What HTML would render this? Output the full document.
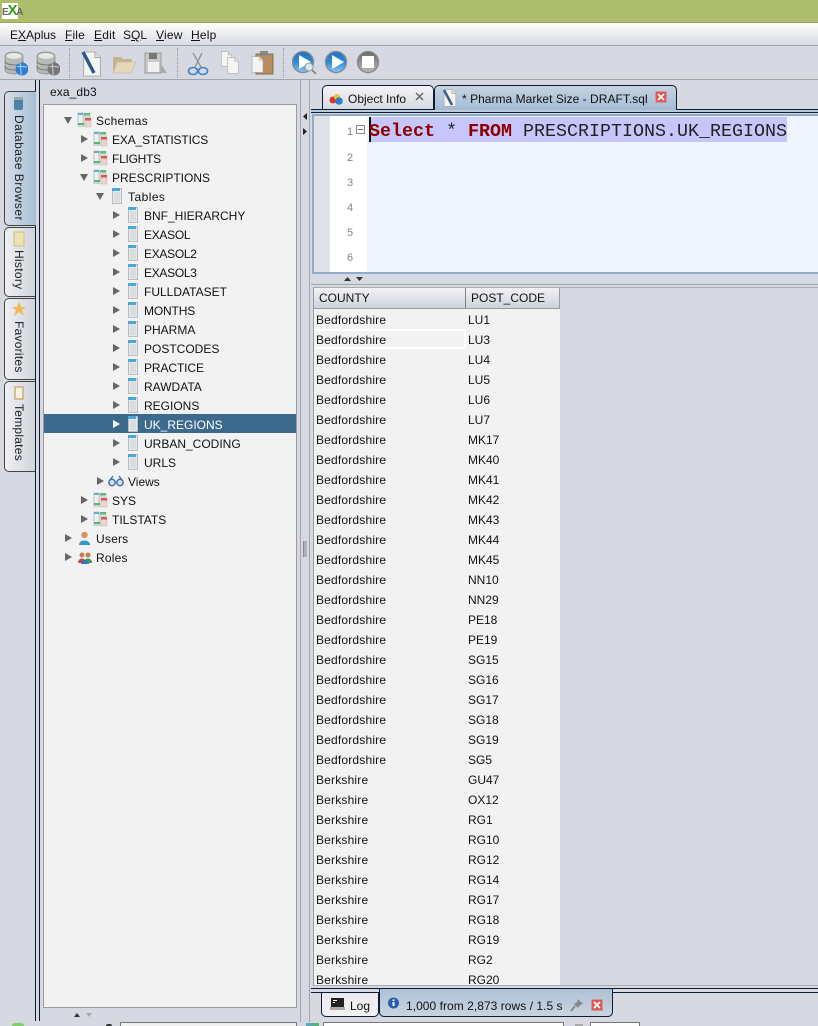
<!DOCTYPE html>
<html><head><meta charset="utf-8"><style>
html,body{margin:0;padding:0;background:#d6d9e1}
#p{position:relative;width:818px;height:1026px;overflow:hidden;background:#d6d9e1;font:12px/16px "Liberation Sans",sans-serif;color:#111}
#p div,#p svg{position:absolute}
.t{position:absolute;white-space:nowrap;height:16px}
.l{letter-spacing:.18px}
.n{font-size:11px;color:#8f8383;left:347px}
u{text-decoration:underline}
.v{position:absolute;white-space:nowrap;transform:rotate(90deg);transform-origin:0 0;height:16px;color:#222}
</style></head><body><div id="p">
<svg width="0" height="0" style="left:0;top:0"><defs>
<linearGradient id="gb" x1="0" y1="0" x2="0" y2="1"><stop offset="0" stop-color="#1b6dc0"/><stop offset=".55" stop-color="#2f8fe0"/><stop offset="1" stop-color="#8cc8f2"/></linearGradient>
<linearGradient id="gg" x1="0" y1="0" x2="0" y2="1"><stop offset="0" stop-color="#666"/><stop offset="1" stop-color="#bbb"/></linearGradient>
<symbol id="sc" viewBox="0 0 15 16"><rect x=".5" y="1" width="13" height="14" fill="#d8dcda"/><rect x="1" y="1" width="5" height="13" fill="#eef0ee" stroke="#aab" stroke-width=".6"/><rect x="1" y="1" width="5" height="2" fill="#6fa9c8"/><rect x="1" y="11" width="6" height="2" fill="#55b868"/><rect x="7" y="1" width="6" height="2.5" fill="#62bd78"/><rect x="8" y="6" width="6" height="9" fill="#f0d2cd" stroke="#bbb" stroke-width=".5"/><rect x="8" y="6" width="6" height="2.5" fill="#cf5c58"/></symbol>
<symbol id="tb" viewBox="0 0 10 16"><rect x=".5" y=".5" width="9" height="15" fill="#e6e9eb" stroke="#b6bcc0"/><rect x="0" y="0" width="8" height="3" fill="#4ba6da"/><path d="M2 5h6M2 7h6M2 9h6M2 11h6M2 13h6" stroke="#cdd1d4"/></symbol>
<symbol id="ar" viewBox="0 0 8 8"><path d="M1 0L8 4L1 8Z" fill="#666"/></symbol>
<symbol id="ad" viewBox="0 0 8 8"><path d="M0 1H8L4 8Z" fill="#666"/></symbol>
<symbol id="arw" viewBox="0 0 8 8"><path d="M1 0L8 4L1 8Z" fill="#fff"/></symbol>
<symbol id="db" viewBox="0 0 20 24"><path d="M1 5a9 4 0 0 1 18 0v14a9 4 0 0 1-18 0z" fill="#b8bab6" stroke="#858585" stroke-width=".7"/><ellipse cx="10" cy="5" rx="7.500" ry="2.900" fill="#e8e8e6"/><path d="M1 10a9 4 0 0 0 18 0M1 15a9 4 0 0 0 18 0" fill="none" stroke="#777"/></symbol>
<symbol id="doc" viewBox="0 0 20 28"><path d="M1 1H13L19 7V27H1z" fill="#f4f4f2" stroke="#aaa"/><path d="M13 1V7H19" fill="#ddd" stroke="#aaa"/></symbol>
</defs></svg>

<!-- title bar -->
<div style="left:0;top:0;width:818px;height:23px;background:#aebd6c;border-bottom:1px solid #98a65c;box-sizing:border-box"></div>
<div style="left:2px;top:3px;width:16px;height:16px;background:#fff"></div>
<div class="t" style="left:2px;top:3px;font:bold 10px/16px 'Liberation Sans',sans-serif;color:#666;letter-spacing:-1.2px">E<span style="color:#3a9a22;font-size:15px">X</span>A</div>

<!-- menu -->
<div style="left:0;top:23px;width:818px;height:23px;background:linear-gradient(#fff,#d8dbe2);border-bottom:1px solid #a3a5ab;box-sizing:border-box"></div>
<div class="t" style="left:10px;top:27px">E<u>X</u>Aplus</div>
<div class="t" style="left:65px;top:27px;letter-spacing:.15px"><u>F</u>ile</div>
<div class="t" style="left:94px;top:27px;letter-spacing:.2px"><u>E</u>dit</div>
<div class="t" style="left:123px;top:27px">S<u>Q</u>L</div>
<div class="t" style="left:156px;top:27px;letter-spacing:.2px"><u>V</u>iew</div>
<div class="t" style="left:191px;top:27px;letter-spacing:.2px"><u>H</u>elp</div>

<!-- toolbar -->
<div style="left:0;top:79px;width:818px;height:1px;background:#a3a5ab"></div>
<div style="left:69px;top:48px;width:0;height:30px;border-left:1px dotted #999"></div>
<div style="left:177px;top:48px;width:0;height:30px;border-left:1px dotted #999"></div>
<div style="left:283px;top:48px;width:0;height:30px;border-left:1px dotted #999"></div>
<svg style="left:4px;top:51px" width="24" height="25"><use href="#db" width="20" height="24"/><circle cx="18" cy="18" r="6.500" fill="#2f7fd0"/><path d="M13 16c3-2 6 0 10 0M16 12c1 4 1 8 1 12" stroke="#a8d4f5" fill="none"/></svg>
<svg style="left:36px;top:51px" width="24" height="25"><use href="#db" width="20" height="24"/><circle cx="18" cy="18" r="6.500" fill="#777"/><path d="M13 16c3-2 6 0 10 0M16 12c1 4 1 8 1 12" stroke="#ccc" fill="none"/></svg>
<svg style="left:80px;top:50px" width="22" height="28"><use href="#doc" width="20" height="26" x="2" y="1"/><path d="M3 2L14 23" stroke="#2a5a8c" stroke-width="3.500"/></svg>
<svg style="left:112px;top:54px" width="24" height="22"><path d="M1 3H9L11 5H20V17H1z" fill="#c5b391"/><path d="M5 8H24L19 19H1z" fill="#e4d7bb" stroke="#c4b597" stroke-width=".6"/></svg>
<svg style="left:144px;top:52px" width="24" height="24"><path d="M1 1H17V21H1z" fill="#c9c9c9" stroke="#999"/><rect x="5" y="1" width="8" height="6" fill="#777"/><rect x="4" y="10" width="11" height="10" fill="#f0f0f0"/><path d="M17 12L23 21H17z" fill="#aaa"/></svg>
<svg style="left:187px;top:52px" width="22" height="25"><path d="M6 1L14 15M15 1L8 15" stroke="#8f8f8f" stroke-width="1.300"/><ellipse cx="6" cy="19" rx="4.500" ry="3.500" fill="none" stroke="#3f82cc" stroke-width="1.600"/><ellipse cx="16" cy="19" rx="4.500" ry="3.500" fill="none" stroke="#3f82cc" stroke-width="1.600"/></svg>
<svg style="left:219px;top:50px" width="22" height="24"><use href="#doc" width="13" height="16" x="1" y="1"/><use href="#doc" width="14" height="17" x="7" y="7"/></svg>
<svg style="left:250px;top:50px" width="24" height="26"><rect x="6" y="4" width="17" height="20" fill="#b78c5e" stroke="#8e6b45"/><rect x="10" y="1" width="8" height="5" fill="#888"/><use href="#doc" width="13" height="17" x="1" y="6"/></svg>
<svg style="left:292px;top:50px" width="26" height="26"><circle cx="11" cy="12" r="10.500" fill="url(#gb)" stroke="#8a8a8a" stroke-width="1.400"/><path d="M7 5L19 12L7 19z" fill="#fff"/><circle cx="17" cy="17" r="4" fill="#d8e6f0" stroke="#999"/><path d="M20 20L24 24" stroke="#777" stroke-width="1.500"/></svg>
<svg style="left:324px;top:50px" width="24" height="24"><circle cx="12" cy="12" r="10.500" fill="url(#gb)" stroke="#8a8a8a" stroke-width="1.400"/><path d="M8 5L20 12L8 19z" fill="#fff"/></svg>
<svg style="left:356px;top:50px" width="24" height="24"><circle cx="12" cy="12" r="10.500" fill="url(#gg)" stroke="#8a8a8a" stroke-width="1.400"/><rect x="6" y="6" width="12" height="12" fill="#fff" rx="1"/></svg>

<!-- left side tabs -->
<div style="left:4px;top:91px;width:32px;height:135px;box-sizing:border-box;border:1px solid #444;border-right:0;border-radius:5px 0 0 5px;background:linear-gradient(90deg,#d6dee8,#a7bed5)"></div>
<div style="left:4px;top:227px;width:32px;height:70px;box-sizing:border-box;border:1px solid #444;border-right:0;border-radius:5px 0 0 5px;background:linear-gradient(90deg,#f0f0f3,#d0d3db)"></div>
<div style="left:4px;top:298px;width:32px;height:82px;box-sizing:border-box;border:1px solid #444;border-right:0;border-radius:5px 0 0 5px;background:linear-gradient(90deg,#f0f0f3,#d0d3db)"></div>
<div style="left:4px;top:381px;width:32px;height:91px;box-sizing:border-box;border:1px solid #444;border-right:0;border-radius:5px 0 0 5px;background:linear-gradient(90deg,#f0f0f3,#d0d3db)"></div>
<svg style="left:13px;top:96px" width="11" height="15"><rect x="1" y="1" width="9" height="13" rx="2" fill="#4d82a8"/><rect x="1" y="1" width="9" height="3" rx="1" fill="#9aa"/></svg>
<svg style="left:12px;top:231px" width="14" height="16"><rect x="2" y="1" width="10" height="14" fill="#ece3b0" stroke="#cbbf85"/></svg>
<svg style="left:12px;top:302px" width="14" height="14"><path d="M7 0L9 5H14L10 8L12 14L7 10L2 14L4 8L0 5H5z" fill="#f0b75c"/></svg>
<svg style="left:14px;top:386px" width="10" height="14"><rect x="1" y="1" width="8" height="12" fill="#f4f0dc" stroke="#c0a060" stroke-width="1.200"/></svg>
<div class="v" style="left:27px;top:115px;letter-spacing:.45px">Database Browser</div>
<div class="v" style="left:27px;top:250px;letter-spacing:.3px">History</div>
<div class="v" style="left:27px;top:321px;letter-spacing:.25px">Favorites</div>
<div class="v" style="left:27px;top:404px;letter-spacing:.25px">Templates</div>
<div style="left:35px;top:80px;width:1px;height:11px;background:#0b1c33"></div>
<div style="left:35px;top:226px;width:1px;height:795px;background:#0b1c33"></div>
<div style="left:39px;top:80px;width:1px;height:941px;background:#0b1c33"></div>

<!-- tree panel -->
<div class="t" style="left:50px;top:84px;letter-spacing:.1px">exa_db3</div>
<div style="left:43px;top:104px;width:254px;height:904px;box-sizing:border-box;border:1px solid #9a9ba0;background:#f2f2f2"></div>
<div style="left:44px;top:414px;width:252px;height:19px;background:#3c6a8d"></div>
<svg style="left:64px;top:116px" width="8" height="8"><use href="#ad" width="8" height="8"/></svg>
<svg style="left:77px;top:112px" width="15" height="16"><use href="#sc"/></svg><div class="t" style="left:96px;top:113px;letter-spacing:.28px">Schemas</div>
<svg style="left:80px;top:135px" width="8" height="8"><use href="#ar" width="8" height="8"/></svg>
<svg style="left:93px;top:131px" width="15" height="16"><use href="#sc"/></svg><div class="t" style="left:112px;top:132px;letter-spacing:-.15px">EXA_STATISTICS</div>
<svg style="left:80px;top:154px" width="8" height="8"><use href="#ar" width="8" height="8"/></svg>
<svg style="left:93px;top:150px" width="15" height="16"><use href="#sc"/></svg><div class="t" style="left:112px;top:151px;letter-spacing:-.25px">FLIGHTS</div>
<svg style="left:80px;top:173px" width="8" height="8"><use href="#ad" width="8" height="8"/></svg>
<svg style="left:93px;top:169px" width="15" height="16"><use href="#sc"/></svg><div class="t" style="left:112px;top:170px">PRESCRIPTIONS</div>
<svg style="left:96px;top:192px" width="8" height="8"><use href="#ad" width="8" height="8"/></svg>
<svg style="left:112px;top:188px" width="10" height="16"><use href="#tb"/></svg><div class="t" style="left:128px;top:189px;letter-spacing:.45px">Tables</div>
<svg style="left:112px;top:211px" width="8" height="8"><use href="#ar" width="8" height="8"/></svg><svg style="left:128px;top:207px" width="10" height="16"><use href="#tb"/></svg><div class="t" style="left:144px;top:208px">BNF_HIERARCHY</div>
<svg style="left:112px;top:230px" width="8" height="8"><use href="#ar" width="8" height="8"/></svg><svg style="left:128px;top:226px" width="10" height="16"><use href="#tb"/></svg><div class="t" style="left:144px;top:227px;letter-spacing:-.3px">EXASOL</div>
<svg style="left:112px;top:249px" width="8" height="8"><use href="#ar" width="8" height="8"/></svg><svg style="left:128px;top:245px" width="10" height="16"><use href="#tb"/></svg><div class="t" style="left:144px;top:246px;letter-spacing:-.3px">EXASOL2</div>
<svg style="left:112px;top:268px" width="8" height="8"><use href="#ar" width="8" height="8"/></svg><svg style="left:128px;top:264px" width="10" height="16"><use href="#tb"/></svg><div class="t" style="left:144px;top:265px;letter-spacing:-.3px">EXASOL3</div>
<svg style="left:112px;top:287px" width="8" height="8"><use href="#ar" width="8" height="8"/></svg><svg style="left:128px;top:283px" width="10" height="16"><use href="#tb"/></svg><div class="t" style="left:144px;top:284px">FULLDATASET</div>
<svg style="left:112px;top:306px" width="8" height="8"><use href="#ar" width="8" height="8"/></svg><svg style="left:128px;top:302px" width="10" height="16"><use href="#tb"/></svg><div class="t" style="left:144px;top:303px;letter-spacing:-.15px">MONTHS</div>
<svg style="left:112px;top:325px" width="8" height="8"><use href="#ar" width="8" height="8"/></svg><svg style="left:128px;top:321px" width="10" height="16"><use href="#tb"/></svg><div class="t" style="left:144px;top:322px">PHARMA</div>
<svg style="left:112px;top:344px" width="8" height="8"><use href="#ar" width="8" height="8"/></svg><svg style="left:128px;top:340px" width="10" height="16"><use href="#tb"/></svg><div class="t" style="left:144px;top:341px">POSTCODES</div>
<svg style="left:112px;top:363px" width="8" height="8"><use href="#ar" width="8" height="8"/></svg><svg style="left:128px;top:359px" width="10" height="16"><use href="#tb"/></svg><div class="t" style="left:144px;top:360px;letter-spacing:-.1px">PRACTICE</div>
<svg style="left:112px;top:382px" width="8" height="8"><use href="#ar" width="8" height="8"/></svg><svg style="left:128px;top:378px" width="10" height="16"><use href="#tb"/></svg><div class="t" style="left:144px;top:379px">RAWDATA</div>
<svg style="left:112px;top:401px" width="8" height="8"><use href="#ar" width="8" height="8"/></svg><svg style="left:128px;top:397px" width="10" height="16"><use href="#tb"/></svg><div class="t" style="left:144px;top:398px">REGIONS</div>
<svg style="left:112px;top:420px" width="8" height="8"><use href="#arw" width="8" height="8"/></svg><svg style="left:128px;top:416px" width="10" height="16"><use href="#tb"/></svg><div class="t" style="left:144px;top:417px;color:#fff">UK_REGIONS</div>
<svg style="left:112px;top:439px" width="8" height="8"><use href="#ar" width="8" height="8"/></svg><svg style="left:128px;top:435px" width="10" height="16"><use href="#tb"/></svg><div class="t" style="left:144px;top:436px">URBAN_CODING</div>
<svg style="left:112px;top:458px" width="8" height="8"><use href="#ar" width="8" height="8"/></svg><svg style="left:128px;top:454px" width="10" height="16"><use href="#tb"/></svg><div class="t" style="left:144px;top:455px">URLS</div>
<svg style="left:96px;top:477px" width="8" height="8"><use href="#ar" width="8" height="8"/></svg>
<svg style="left:108px;top:474px" width="16" height="14"><circle cx="4" cy="8.500" r="3.200" fill="#cfe0f0" stroke="#4a72a8" stroke-width="1.500"/><circle cx="12" cy="8.500" r="3.200" fill="#cfe0f0" stroke="#4a72a8" stroke-width="1.500"/><path d="M2 6L5 2M14 6L11 2" stroke="#4a72a8" stroke-width="1.300"/></svg><div class="t" style="left:128px;top:474px">Views</div>
<svg style="left:80px;top:496px" width="8" height="8"><use href="#ar" width="8" height="8"/></svg>
<svg style="left:93px;top:492px" width="15" height="16"><use href="#sc"/></svg><div class="t" style="left:112px;top:493px">SYS</div>
<svg style="left:80px;top:515px" width="8" height="8"><use href="#ar" width="8" height="8"/></svg>
<svg style="left:93px;top:511px" width="15" height="16"><use href="#sc"/></svg><div class="t" style="left:112px;top:512px">TILSTATS</div>
<svg style="left:64px;top:534px" width="8" height="8"><use href="#ar" width="8" height="8"/></svg>
<svg style="left:78px;top:531px" width="13" height="15"><circle cx="6.500" cy="4" r="3.200" fill="#d9935a"/><path d="M1 14c0-6 11-6 11 0z" fill="#2b9ac4"/></svg><div class="t" style="left:96px;top:531px;letter-spacing:.2px">Users</div>
<svg style="left:64px;top:553px" width="8" height="8"><use href="#ar" width="8" height="8"/></svg>
<svg style="left:78px;top:550px" width="14" height="15"><circle cx="4" cy="5" r="2.500" fill="#c5804f"/><circle cx="10" cy="5" r="2.500" fill="#c5804f"/><path d="M0 13c0-6 8-6 8 0z" fill="#c9453f"/><path d="M6 13c0-6 8-6 8 0z" fill="#3a9a55"/><path d="M3 14c0-5 8-5 8 0z" fill="#2b7ac4"/></svg><div class="t" style="left:96px;top:550px;letter-spacing:.2px">Roles</div>
<svg style="left:73px;top:1012px" width="20" height="6"><path d="M1 5L4 1L7 5z" fill="#333"/><path d="M13 1H19L16 5z" fill="#a8a8a8"/></svg>

<!-- splitters -->
<div style="left:300px;top:80px;width:1px;height:942px;background:#a3a5ab"></div>
<div style="left:309px;top:80px;width:1px;height:942px;background:#a3a5ab"></div>
<svg style="left:301px;top:112px" width="8" height="24"><path d="M6 1L2 4.500L6 8z" fill="#222"/><path d="M2 16L6 19.500L2 23z" fill="#222"/></svg>
<div style="left:303px;top:541px;width:3px;height:16px;background:#aeb1b8;border-left:1px solid #888"></div>

<!-- editor tabs -->
<div style="left:322px;top:85px;width:112px;height:25px;box-sizing:border-box;border:1px solid #0b1c33;border-bottom:0;border-radius:5px 5px 0 0;background:linear-gradient(#f4f4f6,#d6d9e1)"></div>
<div style="left:434px;top:85px;width:243px;height:25px;box-sizing:border-box;border:1px solid #0b1c33;border-bottom:0;border-radius:5px 5px 0 0;background:linear-gradient(#c6d3e1,#a3bcd4)"></div>
<svg style="left:329px;top:93px" width="15" height="13"><circle cx="4" cy="7" r="3.500" fill="#d9342b"/><circle cx="8" cy="4" r="3" fill="#f0c030"/><circle cx="10" cy="8" r="3.800" fill="#2f7fd0"/></svg>
<div class="t" style="left:348px;top:91px">Object Info</div>
<svg style="left:415px;top:92px" width="9" height="9"><path d="M1 1L8 8M8 1L1 8" stroke="#666" stroke-width="1.500"/></svg>
<svg style="left:442px;top:89px" width="16" height="19"><use href="#doc" width="14" height="18" x="1" y="0"/><path d="M2 1L10 16" stroke="#3b5f88" stroke-width="2.500"/></svg>
<div class="t" style="left:462px;top:91px;letter-spacing:.03px">* Pharma Market Size - DRAFT.sql</div>
<svg style="left:655px;top:91px" width="12" height="12"><rect x=".5" y=".5" width="11" height="11" rx="1" fill="#e25555" stroke="#c99"/><path d="M3 3L9 9M9 3L3 9" stroke="#fff" stroke-width="1.700"/></svg>
<div style="left:311px;top:109px;width:507px;height:4px;box-sizing:border-box;border-top:1px solid #0b1c33;border-bottom:1px solid #0b1c33;background:#b9cadb"></div>
<div style="left:434px;top:108px;width:243px;height:2px;background:#a3bcd4;border-left:1px solid #0b1c33;border-right:1px solid #0b1c33;box-sizing:border-box"></div>

<!-- editor -->
<div style="left:312px;top:114px;width:506px;height:160px;box-sizing:border-box;border:2px solid #8daccb;border-right:0;background:#f0f4fe"></div>
<div style="left:314px;top:116px;width:16px;height:156px;background:#dfe2e9"></div>
<div style="left:330px;top:116px;width:37px;height:156px;background:#fff"></div>
<div style="left:369px;top:117px;width:418px;height:25px;background:#c6c6fa"></div>
<div style="left:369px;top:117px;width:2px;height:25px;background:#111"></div>
<div class="t n" style="top:124px">1</div>
<div class="t n" style="top:150px">2</div>
<div class="t n" style="top:175px">3</div>
<div class="t n" style="top:200px">4</div>
<div class="t n" style="top:225px">5</div>
<div class="t n" style="top:250px">6</div>
<div style="left:356px;top:125px;width:9px;height:9px;box-sizing:border-box;border:1px solid #888;background:#fff"></div>
<div style="left:358px;top:129px;width:5px;height:1px;background:#666"></div>
<div class="t" style="left:369px;top:122px;font:18.33px/20px 'Liberation Mono',monospace;height:20px;color:#222"><b style="color:#8e0000">Select</b> * <b style="color:#8e0000">FROM</b> PRESCRIPTIONS.UK_REGIONS</div>
<svg style="left:343px;top:276px" width="22" height="6"><path d="M1 5L4.500 1L8 5z" fill="#333"/><path d="M13 1H20L16.500 5z" fill="#333"/></svg>
<div style="left:311px;top:284px;width:507px;height:1px;background:#a3a5ab"></div>

<!-- table -->
<div style="left:313px;top:287px;width:505px;height:1px;background:#a9abb1"></div>
<div style="left:313px;top:287px;width:1px;height:699px;background:#9a9ba0"></div>
<div style="left:314px;top:288px;width:246px;height:21px;box-sizing:border-box;background:linear-gradient(#f3f3f6,#cfd2da);border-bottom:1px solid #9a9ba0"></div>
<div style="left:465px;top:288px;width:1px;height:20px;background:#7f8187"></div>
<div style="left:559px;top:288px;width:1px;height:20px;background:#9a9ba0"></div>
<div class="t" style="left:319px;top:290px">COUNTY</div>
<div class="t" style="left:471px;top:290px">POST_CODE</div>
<div style="left:314px;top:309px;width:246px;height:676px;background:#f2f2f2"></div>
<div style="left:314px;top:985px;width:504px;height:1px;background:#a9abb1"></div>
<div style="left:315px;top:329px;width:151px;height:20px;box-sizing:border-box;border:2px solid #fff;border-left:0;background:#f2f2f2"></div>
<div class="t l" style="left:316px;top:312px">Bedfordshire</div><div class="t" style="left:468px;top:312px">LU1</div>
<div class="t l" style="left:316px;top:332px">Bedfordshire</div><div class="t" style="left:468px;top:332px">LU3</div>
<div class="t l" style="left:316px;top:352px">Bedfordshire</div><div class="t" style="left:468px;top:352px">LU4</div>
<div class="t l" style="left:316px;top:372px">Bedfordshire</div><div class="t" style="left:468px;top:372px">LU5</div>
<div class="t l" style="left:316px;top:392px">Bedfordshire</div><div class="t" style="left:468px;top:392px">LU6</div>
<div class="t l" style="left:316px;top:412px">Bedfordshire</div><div class="t" style="left:468px;top:412px">LU7</div>
<div class="t l" style="left:316px;top:432px">Bedfordshire</div><div class="t" style="left:468px;top:432px">MK17</div>
<div class="t l" style="left:316px;top:452px">Bedfordshire</div><div class="t" style="left:468px;top:452px">MK40</div>
<div class="t l" style="left:316px;top:472px">Bedfordshire</div><div class="t" style="left:468px;top:472px">MK41</div>
<div class="t l" style="left:316px;top:492px">Bedfordshire</div><div class="t" style="left:468px;top:492px">MK42</div>
<div class="t l" style="left:316px;top:512px">Bedfordshire</div><div class="t" style="left:468px;top:512px">MK43</div>
<div class="t l" style="left:316px;top:532px">Bedfordshire</div><div class="t" style="left:468px;top:532px">MK44</div>
<div class="t l" style="left:316px;top:552px">Bedfordshire</div><div class="t" style="left:468px;top:552px">MK45</div>
<div class="t l" style="left:316px;top:572px">Bedfordshire</div><div class="t" style="left:468px;top:572px">NN10</div>
<div class="t l" style="left:316px;top:592px">Bedfordshire</div><div class="t" style="left:468px;top:592px">NN29</div>
<div class="t l" style="left:316px;top:612px">Bedfordshire</div><div class="t" style="left:468px;top:612px">PE18</div>
<div class="t l" style="left:316px;top:632px">Bedfordshire</div><div class="t" style="left:468px;top:632px">PE19</div>
<div class="t l" style="left:316px;top:652px">Bedfordshire</div><div class="t" style="left:468px;top:652px">SG15</div>
<div class="t l" style="left:316px;top:672px">Bedfordshire</div><div class="t" style="left:468px;top:672px">SG16</div>
<div class="t l" style="left:316px;top:692px">Bedfordshire</div><div class="t" style="left:468px;top:692px">SG17</div>
<div class="t l" style="left:316px;top:712px">Bedfordshire</div><div class="t" style="left:468px;top:712px">SG18</div>
<div class="t l" style="left:316px;top:732px">Bedfordshire</div><div class="t" style="left:468px;top:732px">SG19</div>
<div class="t l" style="left:316px;top:752px">Bedfordshire</div><div class="t" style="left:468px;top:752px">SG5</div>
<div class="t l" style="left:316px;top:772px">Berkshire</div><div class="t" style="left:468px;top:772px">GU47</div>
<div class="t l" style="left:316px;top:792px">Berkshire</div><div class="t" style="left:468px;top:792px">OX12</div>
<div class="t l" style="left:316px;top:812px">Berkshire</div><div class="t" style="left:468px;top:812px">RG1</div>
<div class="t l" style="left:316px;top:832px">Berkshire</div><div class="t" style="left:468px;top:832px">RG10</div>
<div class="t l" style="left:316px;top:852px">Berkshire</div><div class="t" style="left:468px;top:852px">RG12</div>
<div class="t l" style="left:316px;top:872px">Berkshire</div><div class="t" style="left:468px;top:872px">RG14</div>
<div class="t l" style="left:316px;top:892px">Berkshire</div><div class="t" style="left:468px;top:892px">RG17</div>
<div class="t l" style="left:316px;top:912px">Berkshire</div><div class="t" style="left:468px;top:912px">RG18</div>
<div class="t l" style="left:316px;top:932px">Berkshire</div><div class="t" style="left:468px;top:932px">RG19</div>
<div class="t l" style="left:316px;top:952px">Berkshire</div><div class="t" style="left:468px;top:952px">RG2</div>
<div style="left:314px;top:972px;width:246px;height:13px;overflow:hidden"><div class="t l" style="left:2px;top:0">Berkshire</div><div class="t" style="left:154px;top:0">RG20</div></div>

<!-- bottom tabs -->
<div style="left:311px;top:988px;width:507px;height:1px;background:#0b1c33"></div>
<div style="left:311px;top:992px;width:507px;height:1px;background:#0b1c33"></div>
<div style="left:321px;top:992px;width:58px;height:25px;box-sizing:border-box;border:1px solid #0b1c33;border-radius:0 0 5px 5px;background:linear-gradient(#eaeaee,#f2f2f4)"></div>
<div style="left:379px;top:989px;width:234px;height:28px;box-sizing:border-box;border:1px solid #0b1c33;border-top:0;border-radius:0 0 5px 5px;background:linear-gradient(#adc2d7,#c8d3e0)"></div>
<svg style="left:330px;top:997px" width="15" height="14"><rect x="1" y="1" width="13" height="9" fill="#222"/><rect x="3" y="3" width="4" height="1" fill="#fff"/><rect x="3" y="5" width="2" height="1" fill="#fff"/><rect x="0" y="10" width="15" height="3" fill="#aaa"/></svg>
<div class="t" style="left:350px;top:998px">Log</div>
<svg style="left:387px;top:997px" width="13" height="13"><circle cx="6.500" cy="6" r="5.500" fill="#2c5cae"/><rect x="5.500" y="5" width="2" height="4" fill="#fff"/><rect x="5.500" y="2.500" width="2" height="1.500" fill="#fff"/></svg>
<div class="t" style="left:406px;top:998px;letter-spacing:.04px">1,000 from 2,873 rows / 1.5 s</div>
<svg style="left:570px;top:998px" width="14" height="14"><path d="M8 1L13 6L10 7L8 10L4 6L7 4z" fill="#888"/><path d="M5 8L1 13" stroke="#777" stroke-width="1.500"/></svg>
<svg style="left:591px;top:999px" width="12" height="12"><rect x=".5" y=".5" width="11" height="11" rx="1" fill="#e25555" stroke="#c99"/><path d="M3 3L9 9M9 3L3 9" stroke="#fff" stroke-width="1.700"/></svg>

<!-- bottom status strip -->
<div style="left:12px;top:1023px;width:12px;height:3px;border-radius:6px 6px 0 0;background:#7fcf6a"></div>
<div style="left:106px;top:1024px;width:6px;height:2px;background:#333;border-radius:3px 3px 0 0"></div>
<div style="left:120px;top:1022px;width:177px;height:4px;box-sizing:border-box;border:1px solid #777;border-bottom:0;background:#f0f0f0"></div>
<div style="left:306px;top:1023px;width:13px;height:3px;background:linear-gradient(90deg,#5fa3c8,#4fb868)"></div>
<div style="left:323px;top:1022px;width:241px;height:4px;box-sizing:border-box;border:1px solid #777;border-bottom:0;background:#fff"></div>
<div style="left:575px;top:1024px;width:8px;height:2px;background:#aaa"></div>
<div style="left:590px;top:1022px;width:50px;height:4px;box-sizing:border-box;border:1px solid #777;border-bottom:0;background:#fff"></div>
</div></body></html>
